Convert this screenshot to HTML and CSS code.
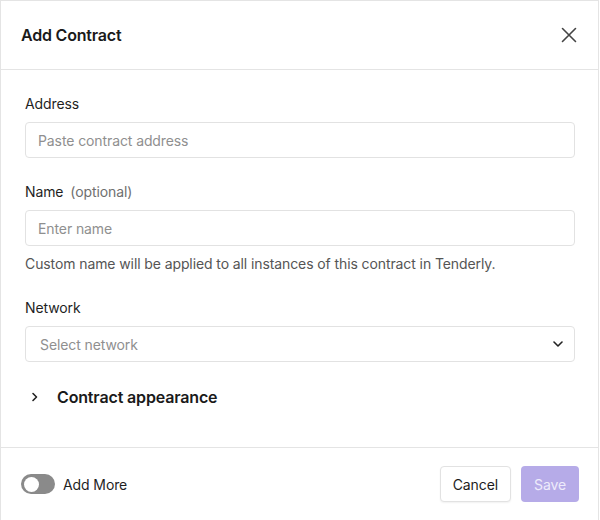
FILE: index.html
```html
<!DOCTYPE html>
<html>
<head>
    <title>Add Contract</title>
    <link rel="stylesheet" href="styles.css">
</head>
<body>
    <div class="modal">
        <div class="modal-header">
            <h2 class="modal-title">Add Contract</h2>
            <button class="icon-btn" aria-label="Close">
                <svg width="16" height="16" viewBox="0 0 16 16" fill="none" stroke="#444" stroke-width="1.6" stroke-linecap="round">
                    <path d="M1.5 1.5L14.5 14.5M14.5 1.5L1.5 14.5"/>
                </svg>
            </button>
        </div>

        <div class="modal-body">
            <div class="field">
                <label class="label">Address</label>
                <input class="input" type="text" placeholder="Paste contract address">
            </div>

            <div class="field">
                <label class="label">Name <span class="muted">(optional)</span></label>
                <input class="input" type="text" placeholder="Enter name">
                <p class="hint">Custom name will be applied to all instances of this contract in Tenderly.</p>
            </div>

            <div class="field">
                <label class="label">Network</label>
                <div class="select">
                    <span class="select-placeholder">Select network</span>
                    <svg width="10" height="6" viewBox="0 0 10 6" fill="none" stroke="#222" stroke-width="1.6" stroke-linecap="round" stroke-linejoin="round">
                        <path d="M1 1L5 5L9 1"/>
                    </svg>
                </div>
            </div>

            <div class="collapse-toggle">
                <svg width="8" height="10" viewBox="0 0 8 10" fill="none" stroke="#222" stroke-width="1.6" stroke-linecap="round" stroke-linejoin="round">
                    <path d="M2 1.5L5.5 5L2 8.5"/>
                </svg>
                <span>Contract appearance</span>
            </div>
        </div>

        <div class="modal-footer">
            <label class="switch">
                <span class="switch-track"><span class="switch-knob"></span></span>
                <span>Add More</span>
            </label>
            <div class="actions">
                <button class="btn btn-secondary">Cancel</button>
                <button class="btn btn-primary" disabled>Save</button>
            </div>
        </div>
    </div>
</body>
</html>
```

FILE: styles.css
```css
body {
    margin: 0;
    font-family: 'Inter', 'Noto Sans', sans-serif;
    letter-spacing: -0.1px;
    color: #1c1c1c;
    background: #ffffff;
}

.modal {
    width: 599px;
    height: 520px;
    box-sizing: border-box;
    border: 1px solid #e4e4e4;
    border-bottom: none;
    display: flex;
    flex-direction: column;
}

/* Header */
.modal-header {
    height: 68px;
    display: flex;
    align-items: center;
    justify-content: space-between;
    padding: 0 17px 0 20px;
    border-bottom: 1px solid #e4e4e4;
}

.modal-title {
    margin: 0;
    font-size: 16px;
    font-weight: 600;
    letter-spacing: -0.2px;
    color: #1a1a1a;
}

.icon-btn {
    border: none;
    background: none;
    padding: 4px;
    display: flex;
    cursor: pointer;
}

/* Body */
.modal-body {
    flex-grow: 1;
    padding: 24px 23px 0 24px;
}

.field {
    margin-bottom: 24px;
}

.label {
    display: block;
    font-size: 14px;
    line-height: 20px;
    margin-bottom: 8px;
    color: #1f1f1f;
}

.muted {
    color: #6f6f6f;
    margin-left: 3px;
}

.input,
.select {
    width: 100%;
    height: 36px;
    box-sizing: border-box;
    border: 1px solid #e2e2e2;
    border-radius: 4px;
    padding: 0 12px;
    font-family: inherit;
    font-size: 14px;
    letter-spacing: -0.1px;
    color: #1c1c1c;
    background: #fff;
    outline: none;
}

.input::placeholder {
    color: #8f8f8f;
}

.select {
    display: flex;
    align-items: center;
    justify-content: space-between;
    padding: 0 11px 0 14px;
}

.select-placeholder {
    color: #8f8f8f;
}

.hint {
    margin: 8px 0 0;
    font-size: 14px;
    line-height: 20px;
    color: #555555;
}

.collapse-toggle {
    display: flex;
    align-items: center;
    gap: 18px;
    padding-left: 6px;
    margin-top: -1px;
    font-size: 16px;
    line-height: 24px;
    font-weight: 600;
    letter-spacing: -0.15px;
    color: #1a1a1a;
}

/* Footer */
.modal-footer {
    height: 73px;
    box-sizing: border-box;
    border-top: 1px solid #e4e4e4;
    display: flex;
    align-items: center;
    justify-content: space-between;
    padding: 0 19px 0 20px;
}

.switch {
    display: flex;
    align-items: center;
    gap: 8px;
    font-size: 14px;
    color: #1f1f1f;
}

.switch-track {
    width: 34px;
    height: 20px;
    border-radius: 10px;
    background: #8a8a8a;
    display: flex;
    align-items: center;
    padding: 0 3px;
    box-sizing: border-box;
}

.switch-knob {
    width: 15px;
    height: 15px;
    border-radius: 50%;
    background: #ffffff;
}

.actions {
    display: flex;
    gap: 10px;
}

.btn {
    height: 36px;
    border-radius: 4px;
    font-family: inherit;
    font-size: 14px;
    font-weight: 400;
    letter-spacing: -0.1px;
    padding: 0 12px;
    cursor: pointer;
}

.btn-secondary {
    background: #ffffff;
    color: #1c1c1c;
    border: 1px solid #e2e2e2;
    box-shadow: 0 1px 2px rgba(0, 0, 0, 0.06);
}

.btn-primary {
    background: #b6abe8;
    color: #eeebfb;
    border: none;
    padding: 0 13px;
}
```
